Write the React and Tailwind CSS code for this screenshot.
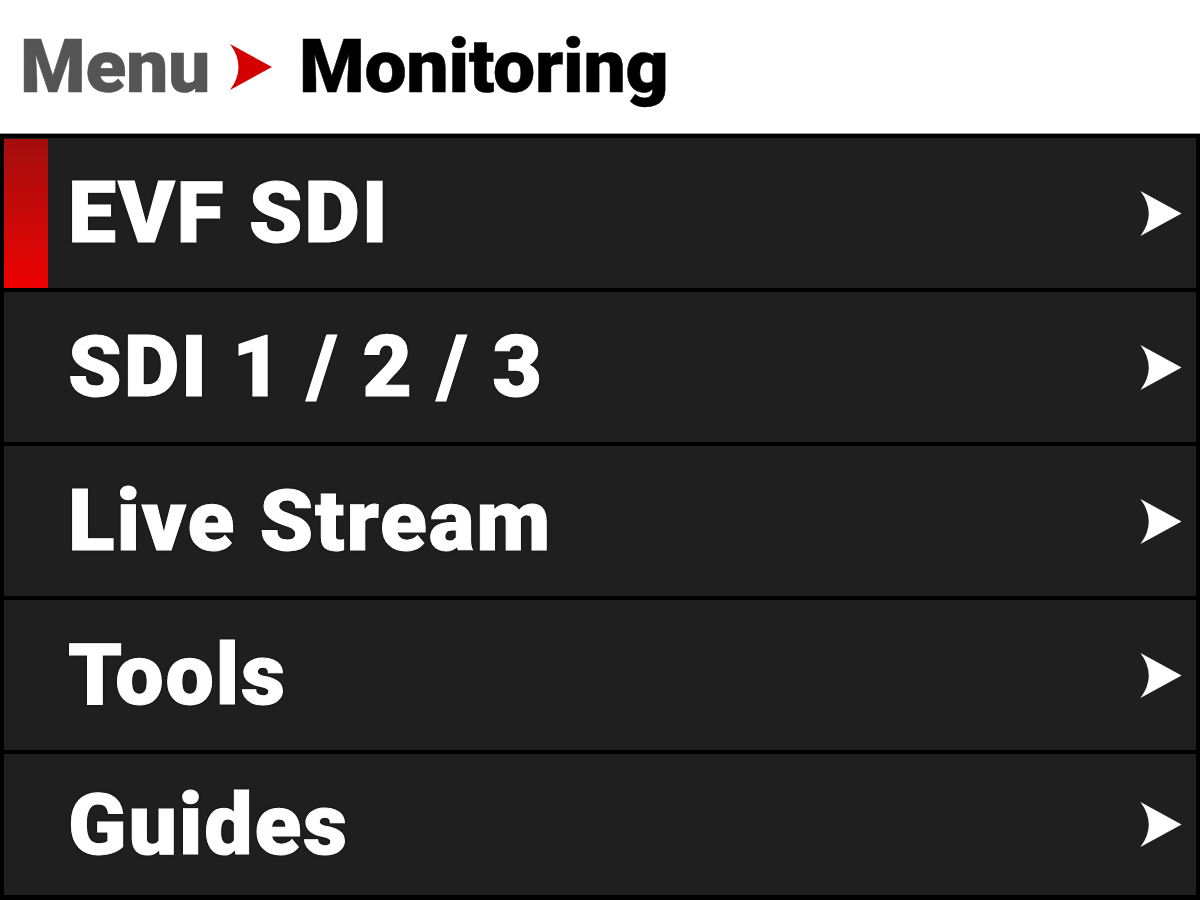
import React from 'react';

const items = ['EVF SDI', 'SDI 1 / 2 / 3', 'Live Stream', 'Tools', 'Guides'];

// arrow head with a concave back, used in the breadcrumb and the rows
const Arrow = ({ className }) => (
  <svg className={className} viewBox="0 0 44 48" fill="currentColor">
    <path d="M1 1 L43 24 L1 47 Q18 24 1 1 Z" />
  </svg>
);

const App = () => {
  return (
    <div className="w-[1200px] h-[900px] overflow-hidden bg-black flex flex-col" style={{ fontFamily: 'Roboto, "Liberation Sans", sans-serif' }}>
      <div className="h-[134px] bg-white flex items-center pl-[20px] border-b border-[#9a9a9a]">
        <span className="text-[75px] font-black text-[#555] tracking-[-0.3px] leading-none [-webkit-text-stroke:0.5px_#555]">Menu</span>
        <Arrow className="w-[44px] h-[48px] text-[#d40000] ml-[19px] mr-[26px]" />
        <span className="text-[75px] font-black text-black tracking-[-0.3px] leading-none [-webkit-text-stroke:0.5px_#000]">Monitoring</span>
      </div>

      <div className="flex-1 flex flex-col gap-[4px] px-[4px] pt-[4px] pb-[5px]">
        {items.map((item, i) => (
          <div
            key={item}
            className={`relative flex items-center bg-[#1f1f1f] pl-[64px] pr-[13px] ${i === items.length - 1 ? 'flex-1' : 'h-[150px] shrink-0'}`}
          >
            {i === 0 && (
              <div className="absolute left-0 top-[1px] bottom-0 w-[44px] bg-gradient-to-b from-[#a30d0d] to-[#ee0000]" />
            )}
            <span className="text-[86px] font-black text-white leading-none tracking-[1.8px] [-webkit-text-stroke:1px_#fff] [text-shadow:0_0_3px_#000]">{item}</span>
            <Arrow className="ml-auto w-[44px] h-[47px] text-white" />
          </div>
        ))}
      </div>
    </div>
  );
};

export default App;
